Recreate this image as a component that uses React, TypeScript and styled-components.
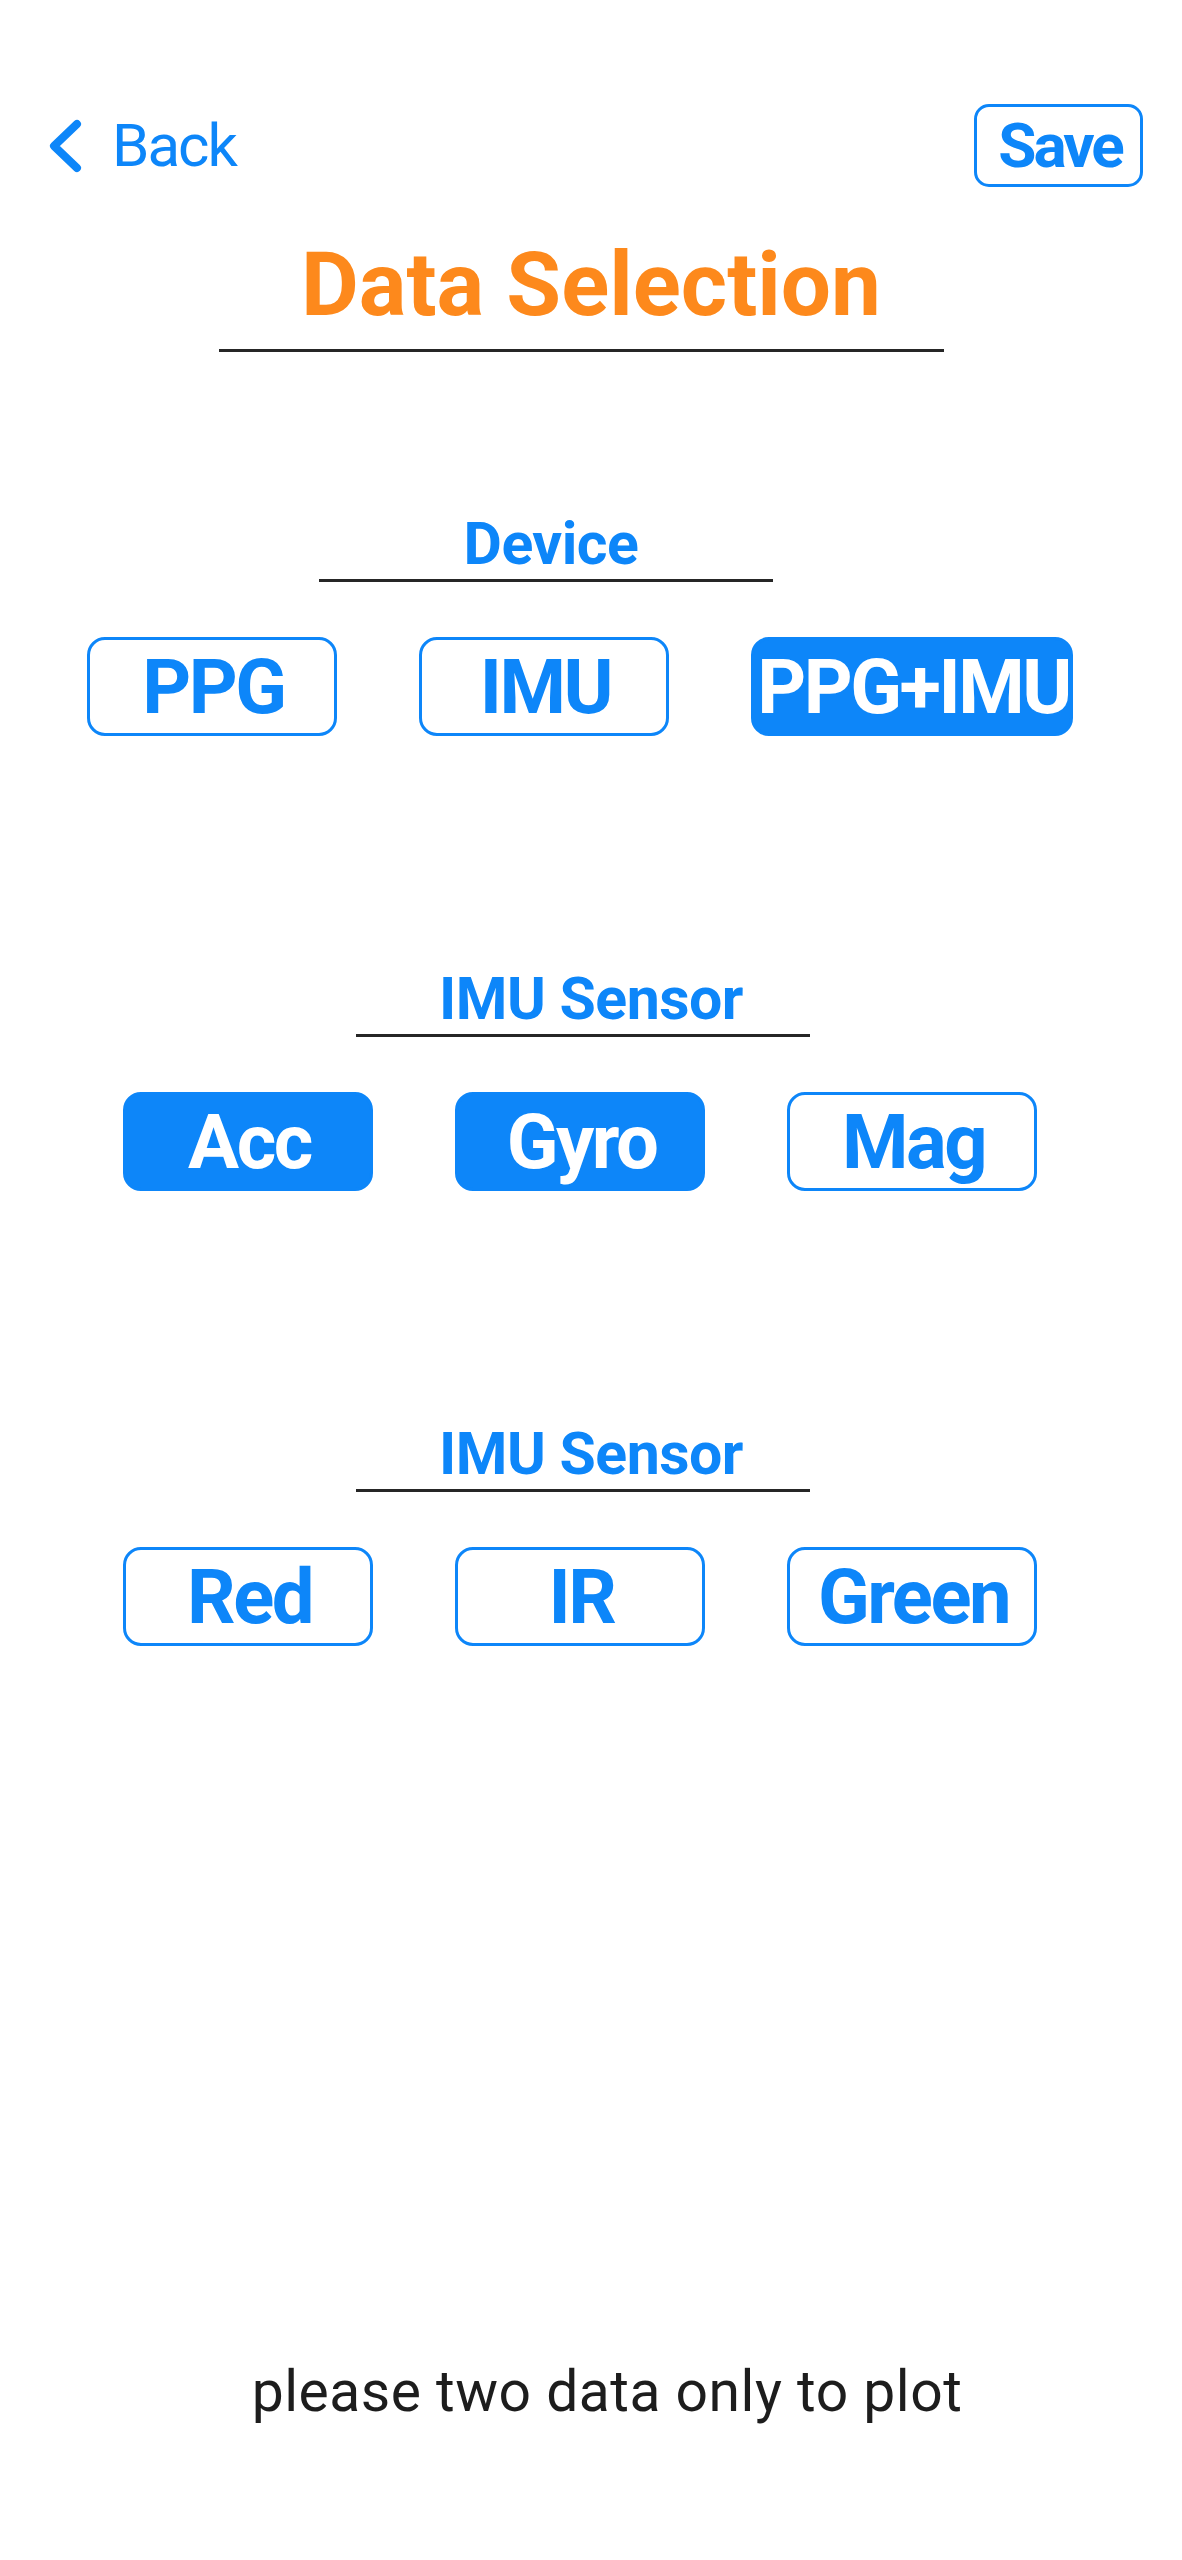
import React from "react";
import styled, { createGlobalStyle } from "styled-components";

const BLUE = "#0d86f9";
const ORANGE = "#fd891c";

const Global = createGlobalStyle`
  html, body { margin: 0; padding: 0; background: #ffffff; }
  body { font-family: Roboto, "Liberation Sans", Arial, sans-serif; }
`;

const Page = styled.main`
  width: 1182px;
  min-height: 2560px;
  box-sizing: border-box;
  padding-top: 104px;
  display: flex;
  flex-direction: column;
  background: #ffffff;
`;

const Header = styled.header`
  display: flex;
  align-items: center;
  justify-content: space-between;
  height: 83px;
  padding: 0 39px 0 46px;
`;

const BackButton = styled.button`
  display: flex;
  align-items: center;
  gap: 26px;
  background: none;
  border: none;
  padding: 0;
  color: ${BLUE};
  font: 400 60px/1 Roboto, "Liberation Sans", sans-serif;
  letter-spacing: -2px;
  cursor: pointer;
`;

const SaveButton = styled.button`
  width: 169px;
  height: 83px;
  box-sizing: border-box;
  display: flex;
  align-items: center;
  justify-content: center;
  padding: 0 0 0 3px;
  border: 3px solid ${BLUE};
  border-radius: 15px;
  background: #ffffff;
  color: ${BLUE};
  font: 700 62px/1 Roboto, "Liberation Sans", sans-serif;
  letter-spacing: -3px;
  cursor: pointer;
`;

const TitleBlock = styled.div`
  margin-top: 53px;
  display: flex;
  flex-direction: column;
  align-items: center;
`;

const Title = styled.h1`
  margin: 0;
  font: 700 89px/1 Roboto, "Liberation Sans", sans-serif;
  color: ${ORANGE};
  letter-spacing: 0;
`;

const Rule = styled.div<{ $w: number; $h: number; $mt: number; $shift?: number }>`
  width: ${(p) => p.$w}px;
  height: ${(p) => p.$h}px;
  margin-top: ${(p) => p.$mt}px;
  margin-right: ${(p) => p.$shift ?? 0}px;
  background: #262626;
`;

const Section = styled.section<{ $mt: number }>`
  margin-top: ${(p) => p.$mt}px;
  display: flex;
  flex-direction: column;
`;

const SectionHead = styled.div<{ $shift: number }>`
  display: flex;
  flex-direction: column;
  align-items: center;
  margin-right: ${(p) => p.$shift}px;
`;

const Label = styled.h2`
  margin: 0;
  font: 700 59px/1 Roboto, "Liberation Sans", sans-serif;
  color: ${BLUE};
  letter-spacing: -0.5px;
`;

const ButtonRow = styled.div`
  display: flex;
  justify-content: center;
  gap: 82px;
  margin-top: 55px;
  margin-right: 22px;
`;

const Choice = styled.button<{ $active: boolean; $w: number }>`
  width: ${(p) => p.$w}px;
  height: 99px;
  box-sizing: border-box;
  display: flex;
  align-items: center;
  justify-content: center;
  padding: 0 0 0 3px;
  border: 3px solid ${BLUE};
  border-radius: 18px;
  background: ${(p) => (p.$active ? BLUE : "#ffffff")};
  color: ${(p) => (p.$active ? "#ffffff" : BLUE)};
  font: 700 76px/1 Roboto, "Liberation Sans", sans-serif;
  letter-spacing: -2.5px;
  white-space: nowrap;
  cursor: pointer;
`;

const Footer = styled.p`
  margin: 717px 0 0;
  padding-left: 32px;
  text-align: center;
  font: 400 57px/1 Roboto, "Liberation Sans", sans-serif;
  letter-spacing: 0.5px;
  color: #1d1d1d;
`;

type Item = { label: string; active: boolean; w?: number };

const sections: { label: string; shift: number; ruleShift: number; mt: number; items: Item[] }[] = [
  {
    label: "Device",
    shift: 80,
    ruleShift: 10,
    mt: 162,
    items: [
      { label: "PPG", active: false },
      { label: "IMU", active: false },
      { label: "PPG+IMU", active: true, w: 322 },
    ],
  },
  {
    label: "IMU Sensor",
    shift: 0,
    ruleShift: 16,
    mt: 233,
    items: [
      { label: "Acc", active: true },
      { label: "Gyro", active: true },
      { label: "Mag", active: false },
    ],
  },
  {
    label: "IMU Sensor",
    shift: 0,
    ruleShift: 16,
    mt: 233,
    items: [
      { label: "Red", active: false },
      { label: "IR", active: false },
      { label: "Green", active: false },
    ],
  },
];

const Chevron = () => (
  <svg width="40" height="56" viewBox="0 0 40 56" aria-hidden="true">
    <path
      d="M31 6 L8 28 L31 50"
      fill="none"
      stroke={BLUE}
      strokeWidth="8"
      strokeLinecap="round"
      strokeLinejoin="round"
    />
  </svg>
);

export default function App() {
  return (
    <>
      <Global />
      <Page>
        <Header>
          <BackButton>
            <Chevron />
            <span>Back</span>
          </BackButton>
          <SaveButton>Save</SaveButton>
        </Header>

        <TitleBlock>
          <Title>Data Selection</Title>
          <Rule $w={725} $h={3} $mt={20} $shift={20} />
        </TitleBlock>

        {sections.map((s, i) => (
          <Section key={i} $mt={s.mt}>
            <SectionHead $shift={s.shift}>
              <Label>{s.label}</Label>
              <Rule $w={454} $h={3} $mt={6} $shift={s.ruleShift} />
            </SectionHead>
            <ButtonRow>
              {s.items.map((it) => (
                <Choice key={it.label} $active={it.active} $w={it.w ?? 250}>
                  {it.label}
                </Choice>
              ))}
            </ButtonRow>
          </Section>
        ))}

        <Footer>please two data only to plot</Footer>
      </Page>
    </>
  );
}
